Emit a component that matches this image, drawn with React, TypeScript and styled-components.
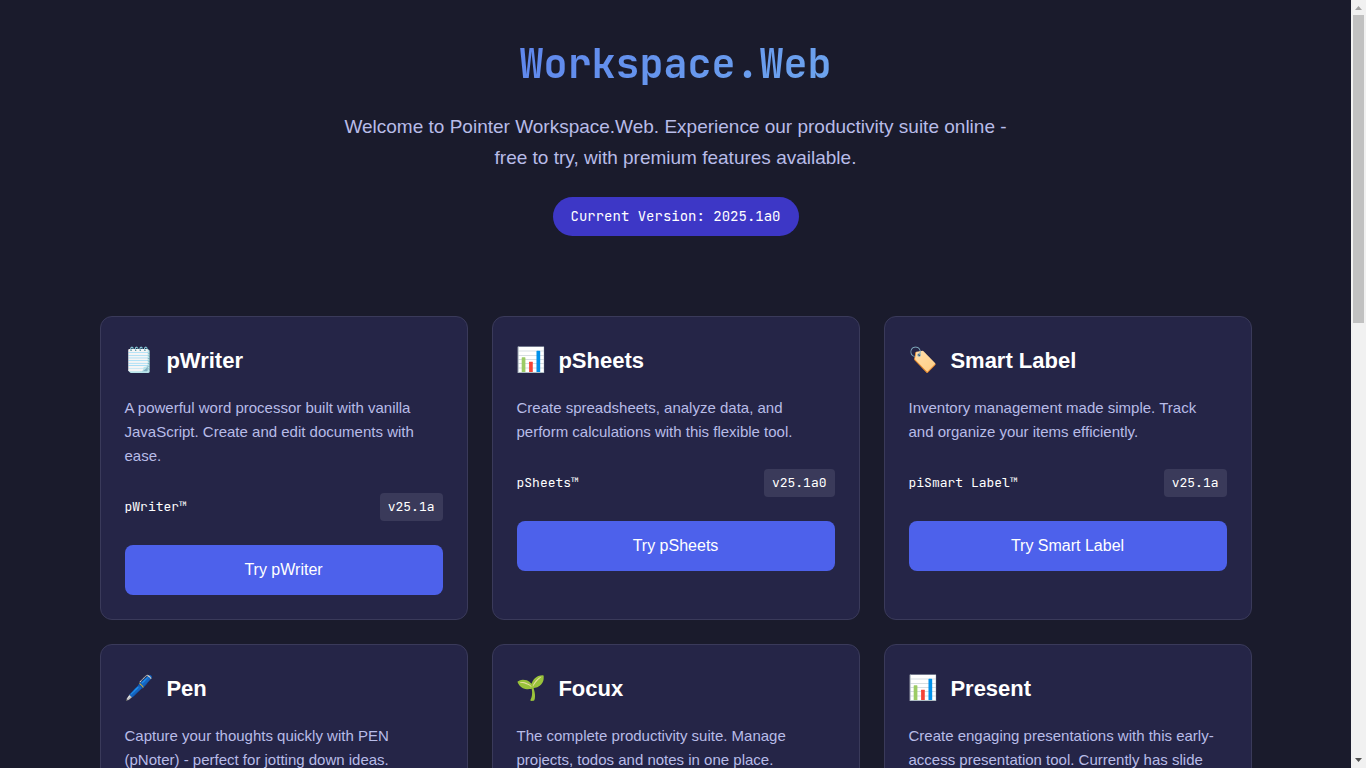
import React from "react";
import styled, { createGlobalStyle } from "styled-components";

const sans = `"Liberation Sans", Arial, sans-serif`;
const mono = `"JetBrains Mono", "DejaVu Sans Mono", "Liberation Mono", monospace`;

const GlobalStyle = createGlobalStyle`
  *, *::before, *::after { box-sizing: border-box; }
  body {
    margin: 0;
    background: #1a1b2c;
    color: #ffffff;
    font-family: ${sans};
    font-size: 16px;
    line-height: 26px;
  }
  h1, h2, p { margin: 0; }
`;

const Shell = styled.div`
  display: flex;
  height: 100vh;
`;

const Page = styled.main`
  flex: 1;
  min-width: 0;
  overflow-x: hidden;
  overflow-y: auto;
  scrollbar-width: none;
`;

const Container = styled.div`
  max-width: 1200px;
  margin: 0 auto;
  padding: 32px 24px;
`;

const Hero = styled.header`
  display: flex;
  flex-direction: column;
  align-items: center;
  text-align: center;
  margin-bottom: 80px;
`;

const Title = styled.h1`
  align-self: stretch;
  margin-bottom: 15px;
  font: 700 40px/64px ${mono};
  color: transparent;
  background: linear-gradient(135deg, #4d61eb, #7fcaf0);
  background-clip: text;
  -webkit-background-clip: text;
`;

const Intro = styled.p`
  max-width: 690px;
  margin-bottom: 24px;
  font-size: 19px;
  line-height: 31px;
  color: #b8bce8;
`;

const VersionPill = styled.span`
  padding: 8px 18px;
  border-radius: 20px;
  background: #3d37c6;
  font: 14px/23px ${mono};
`;

const Grid = styled.section`
  display: grid;
  grid-template-columns: repeat(auto-fit, minmax(300px, 1fr));
  gap: 24px;
`;

const Card = styled.article`
  padding: 24px;
  border: 1px solid #3a3a5a;
  border-radius: 12px;
  background: #252547;
`;

const CardTitle = styled.h2`
  display: flex;
  align-items: center;
  gap: 12px;
  height: 39px;
  margin-bottom: 16px;
  font-size: 22px;
  line-height: 39px;
`;

const Emoji = styled.span`
  font-family: "Noto Color Emoji", sans-serif;
  font-size: 24px;
  font-weight: 400;
`;

const Description = styled.p`
  margin-bottom: 25px;
  padding-right: 4px;
  font-size: 15px;
  line-height: 24px;
  color: #b8bce8;
`;

const Meta = styled.div`
  display: flex;
  justify-content: space-between;
  align-items: center;
  margin-bottom: 24px;
  font: 13px/20px ${mono};
`;

const Tag = styled.span`
  padding: 4px 8px;
  border-radius: 4px;
  background: #3a3a5a;
`;

const TryButton = styled.button`
  display: block;
  width: 100%;
  padding: 12px 24px;
  border: 0;
  border-radius: 8px;
  background: #4d61eb;
  color: #ffffff;
  font: 16px/26px ${sans};
  cursor: pointer;
`;

const ScrollTrack = styled.div`
  display: flex;
  flex-direction: column;
  align-items: center;
  width: 15px;
  padding: 6px 0;
  background: #f1f1f1;
`;

const ScrollRail = styled.div`
  flex: 1;
  width: 11px;
  margin: 5px 0;
`;

const ScrollThumb = styled.div`
  height: calc(100% * 5 / 12);
  background: #c1c1c1;
`;

const products = [
  { icon: "🗒️", name: "pWriter", mark: "pWriter™", version: "v25.1a", text: "A powerful word processor built with vanilla JavaScript. Create and edit documents with ease." },
  { icon: "📊", name: "pSheets", mark: "pSheets™", version: "v25.1a0", text: "Create spreadsheets, analyze data, and perform calculations with this flexible tool." },
  { icon: "🏷️", name: "Smart Label", mark: "piSmart Label™", version: "v25.1a", text: "Inventory management made simple. Track and organize your items efficiently." },
  { icon: "🖊️", name: "Pen", mark: "Pen™", version: "v25.1a", text: "Capture your thoughts quickly with PEN (pNoter) - perfect for jotting down ideas." },
  { icon: "🌱", name: "Focux", mark: "Focux™", version: "v25.1a", text: "The complete productivity suite. Manage projects, todos and notes in one place." },
  { icon: "📊", name: "Present", mark: "Present™", version: "v25.1a", text: "Create engaging presentations with this early-access presentation tool. Currently has slide editing." },
];

export default function App() {
  return (
    <Shell>
      <GlobalStyle />
      <Page>
        <Container>
          <Hero>
            <Title>Workspace.Web</Title>
            <Intro>
              Welcome to Pointer Workspace.Web. Experience our productivity suite online - free to try,
              with premium features available.
            </Intro>
            <VersionPill>Current Version: 2025.1a0</VersionPill>
          </Hero>
          <Grid>
            {products.map((p) => (
              <Card key={p.name}>
                <CardTitle>
                  <Emoji aria-hidden="true">{p.icon}</Emoji>
                  {p.name}
                </CardTitle>
                <Description>{p.text}</Description>
                <Meta>
                  <span>{p.mark}</span>
                  <Tag>{p.version}</Tag>
                </Meta>
                <TryButton type="button">Try {p.name}</TryButton>
              </Card>
            ))}
          </Grid>
        </Container>
      </Page>
      <ScrollTrack aria-hidden="true">
        <svg width="7" height="4" viewBox="0 0 7 4">
          <path d="M0 4 3.5 0 7 4z" fill="#a3a3a3" />
        </svg>
        <ScrollRail>
          <ScrollThumb />
        </ScrollRail>
        <svg width="7" height="4" viewBox="0 0 7 4">
          <path d="M0 0h7L3.5 4z" fill="#505050" />
        </svg>
      </ScrollTrack>
    </Shell>
  );
}
